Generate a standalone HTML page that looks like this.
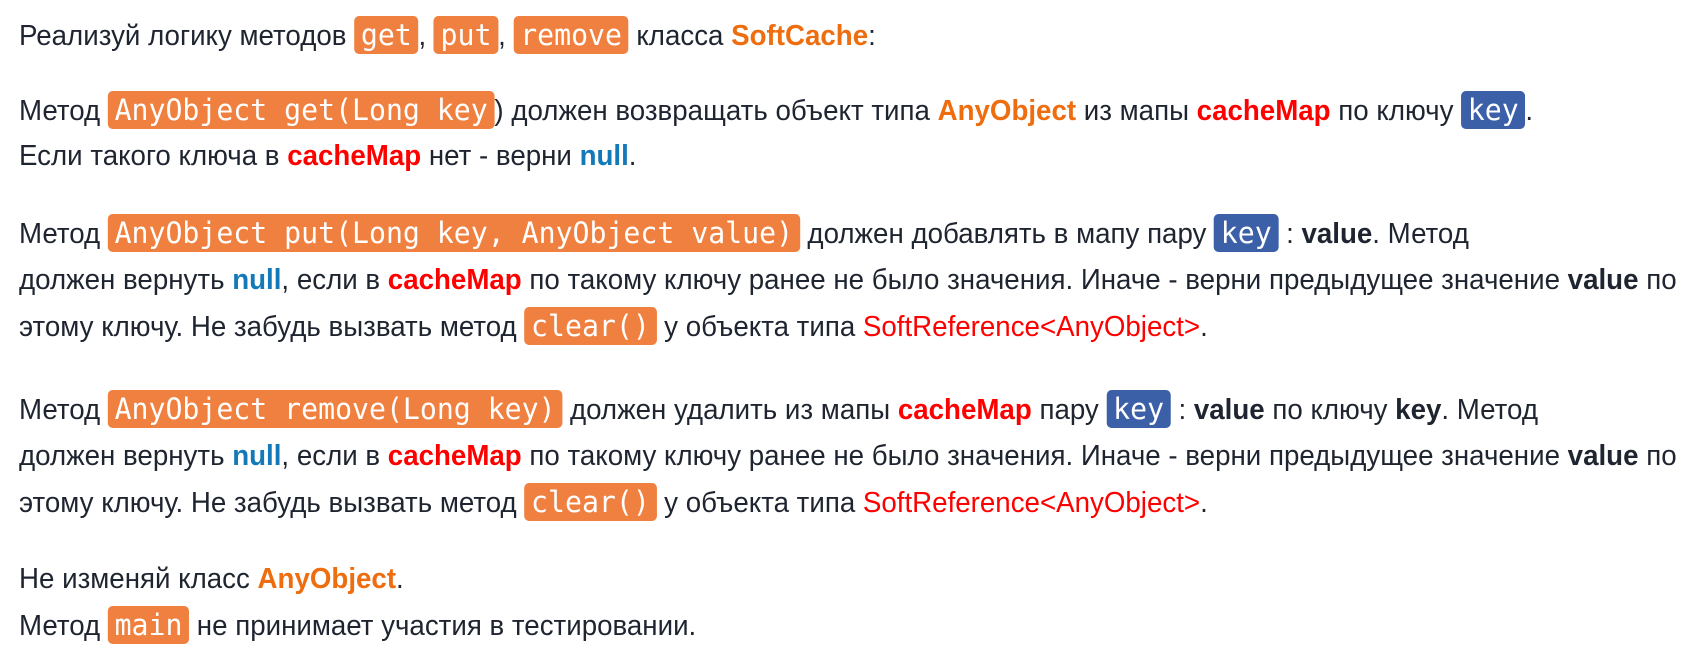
<!DOCTYPE html>
<html><head><meta charset="utf-8"><style>
body{margin:0;background:#fff;width:1694px;height:653px;overflow:hidden;font-family:"Liberation Sans",sans-serif;font-size:29px;color:#1f2530;}
.l{position:absolute;left:19px;white-space:nowrap;transform:scaleX(0.955);transform-origin:left center;line-height:34px;}
code{font-family:"DejaVu Sans Mono","Liberation Mono",monospace;font-size:29.5px;background:#f0803f;color:#fff;border-radius:5px;padding:2px 7px;}
code.k{background:#3b60a8;}
.o{color:#ee6d0e;font-weight:bold}
.r{color:#f00;font-weight:bold}
.n{color:#1479b8;font-weight:bold}
.rr{color:#f00}
b{font-weight:bold}
</style></head><body>
<div class="l" style="top:18px">Реализуй логику методов <code>get</code>, <code>put</code>, <code>remove</code> класса <span class="o">SoftCache</span>:</div>
<div class="l" style="top:93px">Метод <code>AnyObject get(Long key</code>) должен возвращать объект типа <span class="o">AnyObject</span> из мапы <span class="r">cacheMap</span> по ключу <code class="k">key</code>.</div>
<div class="l" style="top:139px">Если такого ключа в <span class="r">cacheMap</span> нет - верни <span class="n">null</span>.</div>
<div class="l" style="top:216px">Метод <code>AnyObject put(Long key, AnyObject value)</code> должен добавлять в мапу пару <code class="k">key</code> : <b>value</b>. Метод</div>
<div class="l" style="top:263px">должен вернуть <span class="n">null</span>, если в <span class="r">cacheMap</span> по такому ключу ранее не было значения. Иначе - верни предыдущее значение <b>value</b> по</div>
<div class="l" style="top:309px">этому ключу. Не забудь вызвать метод <code>clear()</code> у объекта типа <span class="rr">SoftReference&lt;AnyObject&gt;</span>.</div>
<div class="l" style="top:392px">Метод <code>AnyObject remove(Long key)</code> должен удалить из мапы <span class="r">cacheMap</span> пару <code class="k">key</code> : <b>value</b> по ключу <b>key</b>. Метод</div>
<div class="l" style="top:439px">должен вернуть <span class="n">null</span>, если в <span class="r">cacheMap</span> по такому ключу ранее не было значения. Иначе - верни предыдущее значение <b>value</b> по</div>
<div class="l" style="top:485px">этому ключу. Не забудь вызвать метод <code>clear()</code> у объекта типа <span class="rr">SoftReference&lt;AnyObject&gt;</span>.</div>
<div class="l" style="top:562px">Не изменяй класс <span class="o">AnyObject</span>.</div>
<div class="l" style="top:608px">Метод <code>main</code> не принимает участия в тестировании.</div>
</body></html>
